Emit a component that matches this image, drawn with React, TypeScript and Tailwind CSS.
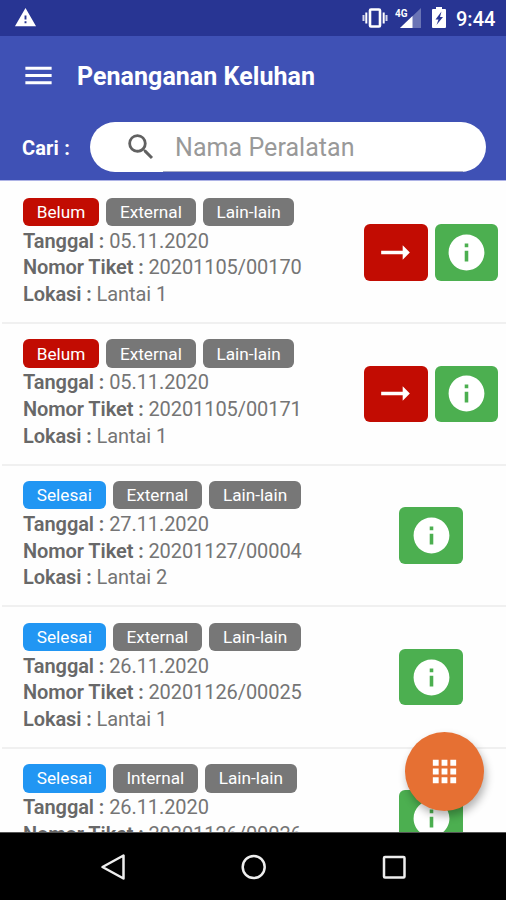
import React from 'react'
import { clsx } from 'clsx'
import { MdApps, MdArrowRightAlt, MdInfo, MdMenu, MdSearch, MdWarning } from 'react-icons/md'

type Status = 'Belum' | 'Selesai'

interface Ticket {
  status: Status
  source: string
  category: string
  date: string
  number: string
  location: string
}

const tickets: Ticket[] = [
  { status: 'Belum', source: 'External', category: 'Lain-lain', date: '05.11.2020', number: '20201105/00170', location: 'Lantai 1' },
  { status: 'Belum', source: 'External', category: 'Lain-lain', date: '05.11.2020', number: '20201105/00171', location: 'Lantai 1' },
  { status: 'Selesai', source: 'External', category: 'Lain-lain', date: '27.11.2020', number: '20201127/00004', location: 'Lantai 2' },
  { status: 'Selesai', source: 'External', category: 'Lain-lain', date: '26.11.2020', number: '20201126/00025', location: 'Lantai 1' },
  { status: 'Selesai', source: 'Internal', category: 'Lain-lain', date: '26.11.2020', number: '20201126/00026', location: 'Lantai 1' },
]

const StatusBar = () => (
  <div className="flex h-[35.5px] shrink-0 items-center bg-[#283593] pr-[12px] pl-[14px] text-white">
    <MdWarning className="size-[23px]" />
    <div className="ml-auto flex items-center">
      <svg viewBox="0 0 26 20" className="h-[20px] w-[26px]" fill="none" stroke="#fff">
        <rect x="8" y="1.500" width="10" height="17" rx="1" strokeWidth="2.600" />
        <path d="M4.300 4.500v11M21.700 4.500v11" strokeWidth="2" />
        <path d="M1.500 7v6M24.500 7v6" strokeWidth="2" strokeOpacity="0.8" />
      </svg>
      <svg viewBox="0 0 27 20" className="ml-[7px] h-[20px] w-[27px]">
        <path d="M26 0V20H5Z" fill="#6a74b5" />
        <path d="M17.500 8.100V20H5Z" fill="#fff" />
        <text x="0" y="8.500" fontSize="11.500" fontWeight="700" fill="#fff" textLength="12.500" lengthAdjust="spacingAndGlyphs">
          4G
        </text>
      </svg>
      <svg viewBox="0 0 14 21" className="ml-[10px] h-[21px] w-[14px]">
        <path d="M4 0h6v2h3q1 0 1 1v17q0 1-1 1H1q-1 0-1-1V3q0-1 1-1h3Z" fill="#fff" />
        <path d="M9.500 4.500 3.500 12.500h3L4.500 18l6.500-8H8Z" fill="#283593" />
      </svg>
      <span className="ml-[10px] w-[38px] pt-[2px] text-[20px] leading-none font-medium whitespace-nowrap">9:44</span>
    </div>
  </div>
)

const Header = () => (
  <header className="flex h-[145px] shrink-0 flex-col border-b border-[#aeb3e6] bg-[#3f51b5] text-white">
    <div className="flex h-[79px] items-center pl-[21px]">
      <MdMenu className="size-[35px]" />
      <h1 className="ml-[21px] pt-[3px] text-[25px] font-bold tracking-[0.04px] whitespace-nowrap">
        Penanganan Keluhan
      </h1>
    </div>
    <div className="flex items-center pt-[7.500px] pr-5 pl-[22px]">
      <label className="w-[68px] pt-[2px] text-[20px] font-bold tracking-[0.15px] whitespace-nowrap">Cari :</label>
      <div className="flex h-[50px] flex-1 items-center rounded-full bg-white pl-[33.500px]">
        <MdSearch className="size-[34px] text-[#616161]" />
        <div className="ml-[5.500px] flex h-[50px] w-[300px] items-center border-b border-[#a3a7c4] pt-[3px] pl-3 text-[25px] tracking-[0.05px] whitespace-nowrap text-[#999]">
          Nama Peralatan
        </div>
      </div>
    </div>
  </header>
)

const Badge = ({ className, children }: { className?: string; children: React.ReactNode }) => (
  <span
    className={clsx(
      'flex h-[28.500px] items-center justify-center rounded-[6px] px-[13.800px] pt-[2px] text-[17.200px] whitespace-nowrap text-white',
      className,
    )}
  >
    {children}
  </span>
)

const Field = ({ label, value }: { label: string; value: string }) => (
  <div className="h-[26.700px] text-[20px] leading-[26.700px] tracking-[-0.08px] whitespace-nowrap text-[#757575]">
    <b className="font-semibold text-[#686868]">{label} :</b> {value}
  </div>
)

const ActionButton = ({ className, children }: { className?: string; children: React.ReactNode }) => (
  <button
    className={clsx(
      'flex h-[56.500px] w-[63.500px] items-center justify-center rounded-[6px] text-white',
      className,
    )}
  >
    {children}
  </button>
)

const TicketRow = ({ ticket }: { ticket: Ticket }) => (
  <li className="ml-[2px] flex h-[141.600px] shrink-0 items-center justify-between border-b-2 border-[#f0f0f0] pr-2 pl-[21px]">
    <div className="mt-[1px]">
      <div className="mb-[1.500px] flex gap-[7px]">
        <Badge className={ticket.status === 'Belum' ? 'bg-[#c20c02]' : 'bg-[#2196f3]'}>{ticket.status}</Badge>
        <Badge className="bg-[#777]">{ticket.source}</Badge>
        <Badge className="bg-[#777]">{ticket.category}</Badge>
      </div>
      <Field label="Tanggal" value={ticket.date} />
      <Field label="Nomor Tiket" value={ticket.number} />
      <Field label="Lokasi" value={ticket.location} />
    </div>
    <div className="flex w-[134px] justify-center gap-[7px]">
      {ticket.status === 'Belum' && (
        <ActionButton className="bg-[#c20c02]">
          <MdArrowRightAlt className="size-[43px]" />
        </ActionButton>
      )}
      <ActionButton className="bg-[#4caf50]">
        <MdInfo className="size-[43px]" />
      </ActionButton>
    </div>
  </li>
)

const NavBar = () => (
  <nav className="flex h-[68px] shrink-0 items-center border-t border-[#555] bg-black pl-[100px]">
    <svg viewBox="0 0 308 30" className="h-[30px] w-[308px]" fill="none" stroke="#eee" strokeWidth="2.500">
      <path d="M23.500 3.500v23L2.500 15Z" strokeLinejoin="round" />
      <circle cx="153.700" cy="15" r="11" />
      <rect x="284" y="5" width="20.500" height="20.500" rx="1" />
    </svg>
  </nav>
)

export default function App() {
  return (
    <div className="relative flex h-[900px] w-[506px] flex-col overflow-hidden bg-[#fefefe] font-['Roboto',sans-serif]">
      <StatusBar />
      <Header />
      <ul className="flex min-h-0 flex-1 flex-col overflow-hidden pt-[2px]">
        {tickets.map((ticket) => (
          <TicketRow key={ticket.number} ticket={ticket} />
        ))}
      </ul>
      <NavBar />
      <button className="absolute right-[22px] bottom-[89.500px] flex size-[79px] items-center justify-center rounded-full bg-[#e67033] text-white shadow-[2px_5px_9px_rgba(0,0,0,0.3)]">
        <MdApps className="size-[35px]" />
      </button>
    </div>
  )
}
